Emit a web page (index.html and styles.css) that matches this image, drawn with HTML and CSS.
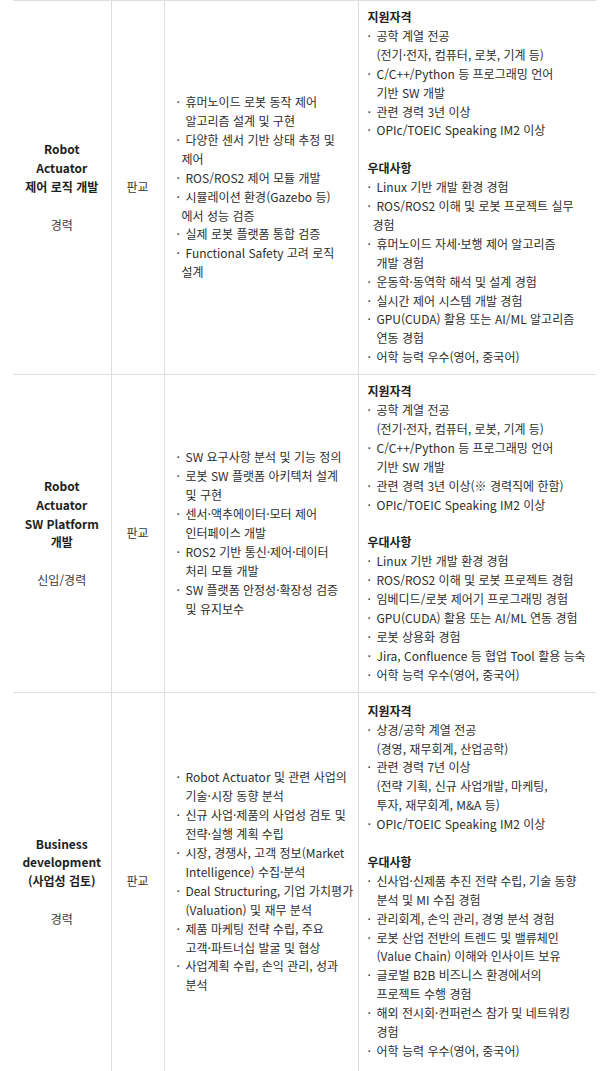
FILE: index.html
```html
<!DOCTYPE html>
<html lang="ko">
<head>
<meta charset="utf-8">
<title>채용 직무</title>
<link rel="stylesheet" href="styles.css">
</head>
<body>
<table class="jobs">
  <colgroup>
    <col class="c-role"><col class="c-loc"><col class="c-task"><col class="c-req">
  </colgroup>
  <tbody>
    <tr>
      <td class="role"><b>Robot<br>Actuator<br>제어 로직 개발</b><br><br>경력</td>
      <td class="loc">판교</td>
      <td class="task">
        <div class="ln"><span class="dot">·</span>휴머노이드 로봇 동작 제어</div>
        <div class="ln cont">알고리즘 설계 및 구현</div>
        <div class="ln"><span class="dot">·</span>다양한 센서 기반 상태 추정 및</div>
        <div class="ln cont s">제어</div>
        <div class="ln"><span class="dot">·</span>ROS/ROS2 제어 모듈 개발</div>
        <div class="ln"><span class="dot">·</span>시뮬레이션 환경(Gazebo 등)</div>
        <div class="ln cont s">에서 성능 검증</div>
        <div class="ln"><span class="dot">·</span>실제 로봇 플랫폼 통합 검증</div>
        <div class="ln"><span class="dot">·</span>Functional Safety 고려 로직</div>
        <div class="ln cont s">설계</div>
      </td>
      <td class="req">
        <div class="ln h">지원자격</div>
        <div class="ln"><span class="dot">·</span>공학 계열 전공</div>
        <div class="ln cont">(전기·전자, 컴퓨터, 로봇, 기계 등)</div>
        <div class="ln"><span class="dot">·</span>C/C++/Python 등 프로그래밍 언어</div>
        <div class="ln cont">기반 SW 개발</div>
        <div class="ln"><span class="dot">·</span>관련 경력 3년 이상</div>
        <div class="ln"><span class="dot">·</span>OPIc/TOEIC Speaking IM2 이상</div>
        <div class="gap"></div>
        <div class="ln h">우대사항</div>
        <div class="ln"><span class="dot">·</span>Linux 기반 개발 환경 경험</div>
        <div class="ln"><span class="dot">·</span>ROS/ROS2 이해 및 로봇 프로젝트 실무</div>
        <div class="ln cont s">경험</div>
        <div class="ln"><span class="dot">·</span>휴머노이드 자세·보행 제어 알고리즘</div>
        <div class="ln cont">개발 경험</div>
        <div class="ln"><span class="dot">·</span>운동학·동역학 해석 및 설계 경험</div>
        <div class="ln"><span class="dot">·</span>실시간 제어 시스템 개발 경험</div>
        <div class="ln"><span class="dot">·</span>GPU(CUDA) 활용 또는 AI/ML 알고리즘</div>
        <div class="ln cont">연동 경험</div>
        <div class="ln"><span class="dot">·</span>어학 능력 우수(영어, 중국어)</div>
      </td>
    </tr>
    <tr>
      <td class="role"><b>Robot<br>Actuator<br>SW Platform<br>개발</b><br><br>신입/경력</td>
      <td class="loc">판교</td>
      <td class="task">
        <div class="ln"><span class="dot">·</span>SW 요구사항 분석 및 기능 정의</div>
        <div class="ln"><span class="dot">·</span>로봇 SW 플랫폼 아키텍처 설계</div>
        <div class="ln cont">및 구현</div>
        <div class="ln"><span class="dot">·</span>센서·액추에이터·모터 제어</div>
        <div class="ln cont">인터페이스 개발</div>
        <div class="ln"><span class="dot">·</span>ROS2 기반 통신·제어·데이터</div>
        <div class="ln cont">처리 모듈 개발</div>
        <div class="ln"><span class="dot">·</span>SW 플랫폼 안정성·확장성 검증</div>
        <div class="ln cont">및 유지보수</div>
      </td>
      <td class="req">
        <div class="ln h">지원자격</div>
        <div class="ln"><span class="dot">·</span>공학 계열 전공</div>
        <div class="ln cont">(전기·전자, 컴퓨터, 로봇, 기계 등)</div>
        <div class="ln"><span class="dot">·</span>C/C++/Python 등 프로그래밍 언어</div>
        <div class="ln cont">기반 SW 개발</div>
        <div class="ln"><span class="dot">·</span>관련 경력 3년 이상(※ 경력직에 한함)</div>
        <div class="ln"><span class="dot">·</span>OPIc/TOEIC Speaking IM2 이상</div>
        <div class="gap"></div>
        <div class="ln h">우대사항</div>
        <div class="ln"><span class="dot">·</span>Linux 기반 개발 환경 경험</div>
        <div class="ln"><span class="dot">·</span>ROS/ROS2 이해 및 로봇 프로젝트 경험</div>
        <div class="ln"><span class="dot">·</span>임베디드/로봇 제어기 프로그래밍 경험</div>
        <div class="ln"><span class="dot">·</span>GPU(CUDA) 활용 또는 AI/ML 연동 경험</div>
        <div class="ln"><span class="dot">·</span>로봇 상용화 경험</div>
        <div class="ln"><span class="dot">·</span>Jira, Confluence 등 협업 Tool 활용 능숙</div>
        <div class="ln"><span class="dot">·</span>어학 능력 우수(영어, 중국어)</div>
      </td>
    </tr>
    <tr>
      <td class="role"><b>Business<br>development<br>(사업성 검토)</b><br><br>경력</td>
      <td class="loc">판교</td>
      <td class="task">
        <div class="ln"><span class="dot">·</span>Robot Actuator 및 관련 사업의</div>
        <div class="ln cont">기술·시장 동향 분석</div>
        <div class="ln"><span class="dot">·</span>신규 사업·제품의 사업성 검토 및</div>
        <div class="ln cont">전략·실행 계획 수립</div>
        <div class="ln"><span class="dot">·</span>시장, 경쟁사, 고객 정보(Market</div>
        <div class="ln cont">Intelligence) 수집·분석</div>
        <div class="ln"><span class="dot">·</span>Deal Structuring, 기업 가치평가</div>
        <div class="ln cont">(Valuation) 및 재무 분석</div>
        <div class="ln"><span class="dot">·</span>제품 마케팅 전략 수립, 주요</div>
        <div class="ln cont">고객·파트너십 발굴 및 협상</div>
        <div class="ln"><span class="dot">·</span>사업계획 수립, 손익 관리, 성과</div>
        <div class="ln cont">분석</div>
      </td>
      <td class="req tall">
        <div class="ln h">지원자격</div>
        <div class="ln"><span class="dot">·</span>상경/공학 계열 전공</div>
        <div class="ln cont">(경영, 재무회계, 산업공학)</div>
        <div class="ln"><span class="dot">·</span>관련 경력 7년 이상</div>
        <div class="ln cont">(전략 기획, 신규 사업개발, 마케팅,</div>
        <div class="ln cont">투자, 재무회계, M&amp;A 등)</div>
        <div class="ln"><span class="dot">·</span>OPIc/TOEIC Speaking IM2 이상</div>
        <div class="gap"></div>
        <div class="ln h">우대사항</div>
        <div class="ln"><span class="dot">·</span>신사업·신제품 추진 전략 수립, 기술 동향</div>
        <div class="ln cont">분석 및 MI 수집 경험</div>
        <div class="ln"><span class="dot">·</span>관리회계, 손익 관리, 경영 분석 경험</div>
        <div class="ln"><span class="dot">·</span>로봇 산업 전반의 트렌드 및 밸류체인</div>
        <div class="ln cont">(Value Chain) 이해와 인사이트 보유</div>
        <div class="ln"><span class="dot">·</span>글로벌 B2B 비즈니스 환경에서의</div>
        <div class="ln cont">프로젝트 수행 경험</div>
        <div class="ln"><span class="dot">·</span>해외 전시회·컨퍼런스 참가 및 네트워킹</div>
        <div class="ln cont">경험</div>
        <div class="ln"><span class="dot">·</span>어학 능력 우수(영어, 중국어)</div>
      </td>
    </tr>
    <tr class="next">
      <td></td><td></td><td></td><td></td>
    </tr>
  </tbody>
</table>
</body>
</html>
```

FILE: styles.css
```css
html, body {
  margin: 0;
  padding: 0;
  background: #fff;
  overflow: hidden;
}

body {
  font-family: "Noto Sans CJK KR", sans-serif;
  font-size: 12px;
  letter-spacing: 0;
  color: #2e2e2e;
}

.jobs {
  margin-left: 13px;
  width: 583px;
  border-collapse: collapse;
  table-layout: fixed;
}

.c-role { width: 98px; }
.c-loc  { width: 53px; }
.c-task { width: 194px; }
.c-req  { width: 238px; }

.jobs td {
  border: 1px solid #dedede;
  padding: 0;
  vertical-align: middle;
  line-height: 18.9px;
}

.jobs td:first-child { border-left: none; }
.jobs td:last-child { border-right: none; }

.role {
  text-align: center;
  color: #3a3a3a;
}

.role b {
  color: #1e1e1e;
  font-weight: 700;
}

.loc {
  text-align: center;
  color: #3a3a3a;
}

.task {
  padding-left: 12px !important;
}

.req {
  padding: 7px 0 7px 9px !important;
  vertical-align: top !important;
}

.req.tall {
  padding: 9px 0 10px 9px !important;
}

.ln {
  white-space: nowrap;
}

.dot {
  display: inline-block;
  width: 9px;
}

.cont {
  padding-left: 9px;
}

.cont.s {
  padding-left: 5px;
}

.h {
  font-weight: 700;
  color: #1e1e1e;
}

.gap {
  height: 18.9px;
}

.next td {
  height: 40px;
}
```
